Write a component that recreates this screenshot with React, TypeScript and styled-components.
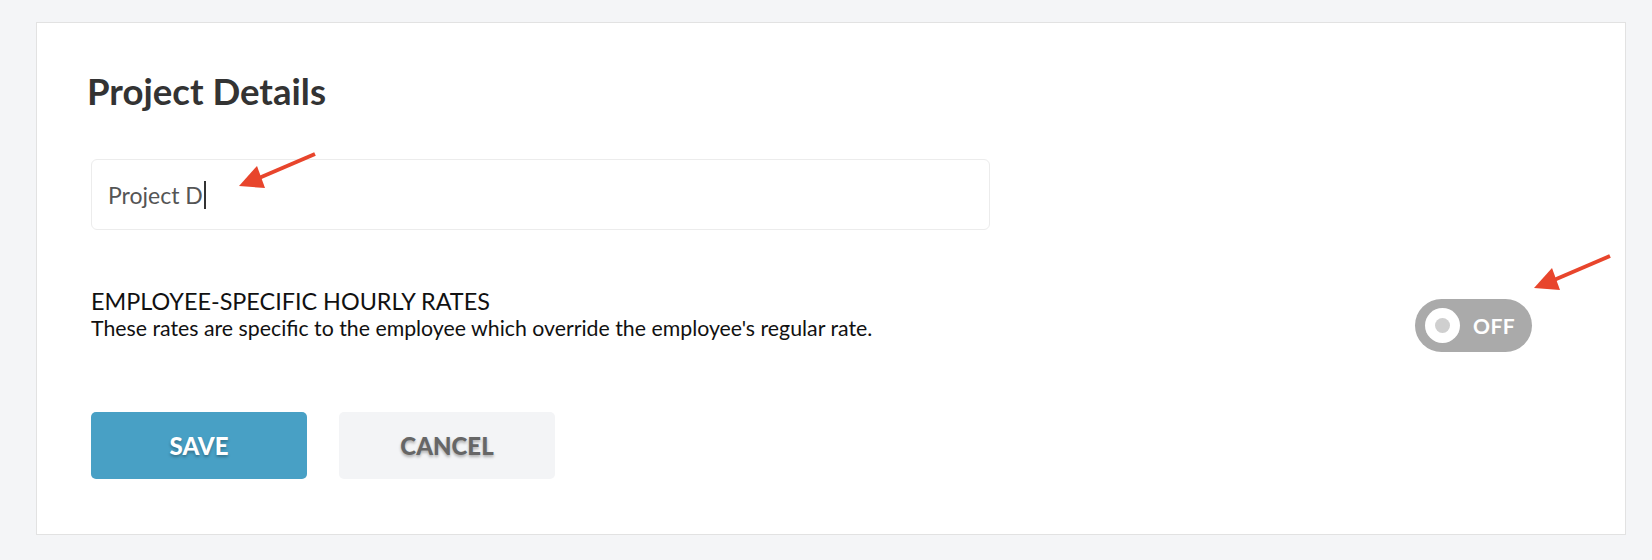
import styled, { createGlobalStyle } from 'styled-components';

const GlobalStyle = createGlobalStyle`
  html, body {
    margin: 0;
    padding: 0;
    background: #f4f5f7;
    font-family: Lato, 'Open Sans', sans-serif;
  }
`;

const Page = styled.div`
  padding: 22px 26px 28px 36px;
`;

const Card = styled.div`
  position: relative;
  background: #fff;
  border: 1px solid #e2e2e2;
  padding: 46px 93px 55px 54px;
`;

const Title = styled.h1`
  margin: 0 0 0 -4px;
  font-size: 36.6px;
  font-weight: 700;
  color: #333;
`;

const Field = styled.div`
  margin-top: 46px;
  width: 899px;
  height: 71px;
  box-sizing: border-box;
  border: 1px solid #ececec;
  border-radius: 6px;
  padding: 0 16px;
  display: flex;
  align-items: center;
  font-size: 23px;
  color: #555;
`;

const Caret = styled.span`
  display: inline-block;
  width: 2px;
  height: 28px;
  margin-left: 1px;
  background: #333;
`;

const SettingRow = styled.div`
  margin-top: 57px;
  display: flex;
  justify-content: space-between;
  align-items: flex-start;
`;

const SettingText = styled.div`
  display: flex;
  flex-direction: column;
`;

const SettingName = styled.div`
  font-size: 23.4px;
  color: #111;
`;

const SettingDesc = styled.div`
  font-size: 21.3px;
  color: #111;
`;

const Toggle = styled.div<{ on?: boolean }>`
  margin-top: 12px;
  width: 117px;
  height: 53px;
  border-radius: 27px;
  background: ${p => (p.on ? '#48a0c5' : '#aaaaaa')};
  display: flex;
  align-items: center;
  padding-left: 10px;
  box-sizing: border-box;
  gap: 13px;
`;

const Knob = styled.div`
  width: 35px;
  height: 35px;
  border-radius: 50%;
  background: #fff;
  display: flex;
  align-items: center;
  justify-content: center;
`;

const KnobDot = styled.div`
  width: 15px;
  height: 15px;
  border-radius: 50%;
  background: #cfcfcf;
`;

const ToggleLabel = styled.span`
  color: #fff;
  font-size: 21px;
  font-weight: 700;
  letter-spacing: 0.5px;
`;

const Actions = styled.div`
  margin-top: 60px;
  display: flex;
  gap: 32px;
`;

const Button = styled.button<{ primary?: boolean }>`
  width: 216px;
  height: 67px;
  border: none;
  border-radius: 5px;
  font-family: Lato, sans-serif;
  font-size: 24px;
  font-weight: 900;
  cursor: pointer;
  background: ${p => (p.primary ? '#48a0c5' : '#f3f4f6')};
  color: ${p => (p.primary ? '#fff' : '#666')};
  text-shadow: 0 2px 3px rgba(0, 0, 0, 0.3);
`;

const ArrowMark = styled.svg<{ x: number; y: number }>`
  position: absolute;
  left: ${p => p.x}px;
  top: ${p => p.y}px;
  width: 84px;
  height: 42px;
`;

// red callout arrows drawn over the form
const Arrow = ({ x, y }: { x: number; y: number }) => (
  <ArrowMark x={x} y={y} viewBox="0 0 84 42">
    <line x1="80" y1="4" x2="24" y2="28" stroke="#e8452c" strokeWidth="4" />
    <polygon points="4,36 22,16 30,38" fill="#e8452c" />
  </ArrowMark>
);

export default function App() {
  return (
    <>
      <GlobalStyle />
      <Page>
        <Card>
          <Title>Project Details</Title>
          <Field role="textbox">
            Project D<Caret />
          </Field>
          <SettingRow>
            <SettingText>
              <SettingName>EMPLOYEE-SPECIFIC HOURLY RATES</SettingName>
              <SettingDesc>
                These rates are specific to the employee which override the employee's regular rate.
              </SettingDesc>
            </SettingText>
            <Toggle>
              <Knob>
                <KnobDot />
              </Knob>
              <ToggleLabel>OFF</ToggleLabel>
            </Toggle>
          </SettingRow>
          <Actions>
            <Button primary>SAVE</Button>
            <Button>CANCEL</Button>
          </Actions>
          <Arrow x={198} y={127} />
          <Arrow x={1493} y={229} />
        </Card>
      </Page>
    </>
  );
}
